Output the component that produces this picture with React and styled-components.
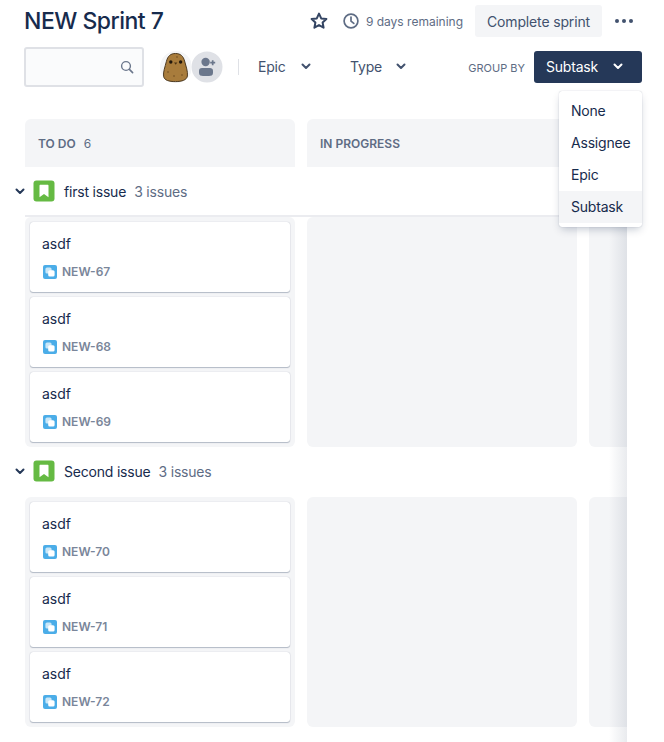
import React from 'react';
import styled, { createGlobalStyle } from 'styled-components';

const GlobalStyle = createGlobalStyle`
  html, body {
    margin: 0;
    padding: 0;
    background: #fff;
    font-family: Inter, "Liberation Sans", sans-serif;
    color: #172b4d;
  }
  * {
    box-sizing: border-box;
  }
`;

const Chevron = ({ color = 'currentColor' }) => (
  <svg width="10" height="7" viewBox="0 0 10 7" fill="none">
    <path d="M1.5 1.5 L5 5 L8.5 1.5" stroke={color} strokeWidth="2" strokeLinecap="round" strokeLinejoin="round" />
  </svg>
);

const Star = () => (
  <svg width="20" height="20" viewBox="0 0 20 20" fill="none">
    <path
      d="M10 2.6 L12.2 7.4 L17.4 8 L13.6 11.5 L14.6 16.7 L10 14.1 L5.4 16.7 L6.4 11.5 L2.6 8 L7.8 7.4 Z"
      stroke="#344563"
      strokeWidth="2"
      strokeLinejoin="round"
    />
  </svg>
);

const Clock = () => (
  <svg width="16" height="16" viewBox="0 0 16 16" fill="none">
    <circle cx="8" cy="8" r="6.9" stroke="#5e6c84" strokeWidth="1.7" />
    <path d="M8 4 V8.2 L10.8 10.4" stroke="#5e6c84" strokeWidth="1.7" strokeLinecap="round" strokeLinejoin="round" />
  </svg>
);

const Search = () => (
  <svg width="14" height="14" viewBox="0 0 14 14" fill="none">
    <circle cx="6" cy="6" r="4.4" stroke="#6b778c" strokeWidth="1.4" />
    <path d="M9.4 9.4 L12.6 12.6" stroke="#6b778c" strokeWidth="1.6" strokeLinecap="round" />
  </svg>
);

const Potato = () => (
  <svg width="31" height="32" viewBox="0 0 31 32">
    <circle cx="16" cy="16" r="16" fill="#f4f5f7" />
    <path
      d="M15.5 2.5 C20.5 2.5 23.2 5 24.6 10 C26 15.4 28 20.6 27.4 25 C26.8 29 22 30.6 15.5 30.6 C9 30.6 4.2 29.4 3.6 25.2 C3 21 5 16 6.4 10.4 C7.8 5 10.5 2.5 15.5 2.5 Z"
      fill="#a87c3c"
      stroke="#3f2c14"
      strokeWidth="0.9"
    />
    <circle cx="10.8" cy="11" r="1.7" fill="#21170c" />
    <circle cx="20.6" cy="11" r="1.7" fill="#21170c" />
    <path d="M14 11.6 H17.4 L15.7 13.8 Z" fill="#4e3515" />
    <circle cx="8" cy="21" r="0.8" fill="#6f4d20" />
    <circle cx="17" cy="6" r="0.8" fill="#6f4d20" />
    <circle cx="22" cy="24" r="0.8" fill="#6f4d20" />
    <circle cx="14" cy="25" r="0.8" fill="#6f4d20" />
  </svg>
);

const AddPerson = () => (
  <svg width="32" height="32" viewBox="0 0 32 32">
    <circle cx="16" cy="16" r="15.5" fill="#dfe1e6" />
    <circle cx="14.6" cy="11" r="4.2" fill="#6b778c" />
    <path d="M8 19.5 C8 17.8 9.4 17 11 17 H19 C20.6 17 22 18 22 19.5 V22 C22 24.4 20 25 18 25 H12 C10 25 8 24.4 8 22 Z" fill="#6b778c" />
    <path d="M21.7 9.2 V14.2 M19.2 11.7 H24.2" stroke="#6b778c" strokeWidth="1.7" />
  </svg>
);

const Bookmark = () => (
  <svg width="22" height="22" viewBox="0 0 22 22">
    <rect x="0.5" y="0.5" width="21" height="21" rx="3" fill="#65ba43" />
    <path d="M6.5 5.8 C6.5 5.2 6.9 4.8 7.5 4.8 H14.5 C15.1 4.8 15.5 5.2 15.5 5.8 V17.2 L11 14 L6.5 17.2 Z" fill="#fff" />
  </svg>
);

const SubtaskIcon = () => (
  <svg width="14" height="14" viewBox="0 0 14 14">
    <rect width="14" height="14" rx="2" fill="#4bade8" />
    <rect x="2.4" y="2.4" width="6.2" height="6.2" rx="1.6" fill="#fff" fillOpacity="0.7" />
    <rect x="5.2" y="5.2" width="6.4" height="6.4" rx="1.6" fill="#fff" />
  </svg>
);

const Page = styled.div`
  position: relative;
  width: 664px;
  height: 742px;
  overflow: hidden;
`;

const TitleRow = styled.header`
  display: flex;
  align-items: center;
  height: 32px;
  margin-top: 5px;
  padding: 0 31px 0 24px;
`;

const Title = styled.h1`
  flex: 1;
  margin: 0;
  font-size: 23px;
  line-height: 32px;
  font-weight: 500;
  letter-spacing: -0.5px;
  color: #172b4d;
`;

const StarSlot = styled.span`
  display: flex;
  margin-right: 14px;
`;

const Remaining = styled.span`
  display: flex;
  align-items: center;
  gap: 7px;
  margin-right: 12px;
  font-size: 12px;
  color: #5e6c84;
`;

const CompleteButton = styled.button`
  width: 127px;
  height: 32px;
  padding: 0;
  border: 0;
  border-radius: 3px;
  background: #f4f5f7;
  color: #42526e;
  font: 400 14px Inter, "Liberation Sans", sans-serif;
  letter-spacing: -0.15px;
`;

const Dots = styled.span`
  display: flex;
  gap: 3px;
  margin-left: 13px;
`;

const Dot = styled.i`
  width: 4px;
  height: 4px;
  border-radius: 50%;
  background: #42526e;
`;

const Toolbar = styled.div`
  display: flex;
  align-items: center;
  height: 40px;
  margin-top: 10px;
  padding: 0 22px 0 24px;
`;

const SearchBox = styled.div`
  display: flex;
  align-items: center;
  justify-content: flex-end;
  width: 120px;
  height: 40px;
  padding-right: 8px;
  border: 2px solid #dfe1e6;
  border-radius: 3px;
  background: #fafbfc;
`;

const Avatars = styled.div`
  display: flex;
  margin-left: 16px;
`;

const Divider = styled.span`
  width: 1px;
  height: 16px;
  margin: 0 19px 0 15px;
  background: #dfe1e6;
`;

const Filter = styled.span`
  display: flex;
  align-items: center;
  gap: ${(p) => p.$gap}px;
  width: ${(p) => p.$width}px;
  padding-bottom: 2px;
  font-size: 14px;
  letter-spacing: -0.2px;
  color: #42526e;
`;

const GroupLabel = styled.span`
  margin: 1px 9px 0 auto;
  font-size: 11px;
  color: #5e6c84;
`;

const GroupButton = styled.button`
  display: flex;
  align-items: center;
  justify-content: space-between;
  width: 108px;
  height: 32px;
  padding: 0 19px 2px 12px;
  border: 0;
  border-radius: 3px;
  background: #253858;
  color: #fff;
  font: 400 14px Inter, "Liberation Sans", sans-serif;
  letter-spacing: -0.2px;
`;

const Menu = styled.ul`
  position: absolute;
  top: 91px;
  left: 559px;
  z-index: 3;
  width: 83px;
  margin: 0;
  padding: 4px 0;
  list-style: none;
  border-radius: 3px;
  background: #fff;
  box-shadow: 0 4px 8px -2px rgba(9, 30, 66, 0.25), 0 0 1px rgba(9, 30, 66, 0.31);
`;

const MenuItem = styled.li`
  height: 32px;
  padding-left: 12px;
  font-size: 14px;
  letter-spacing: -0.2px;
  line-height: 32px;
  color: #172b4d;
  background: ${(p) => (p.$active ? '#f4f5f7' : 'transparent')};
`;

const Board = styled.section`
  position: relative;
  width: 627px;
  height: 623px;
  margin-top: 32px;
  overflow: hidden;
`;

const Fade = styled.div`
  position: absolute;
  top: 0;
  right: 0;
  bottom: 0;
  width: 18px;
  background: linear-gradient(to right, rgba(9, 30, 66, 0), rgba(9, 30, 66, 0.09));
`;

const Columns = styled.div`
  display: grid;
  grid-template-columns: repeat(3, 270px);
  gap: 12px;
  padding-left: 25px;
`;

const ColumnHead = styled.div`
  height: 48px;
  padding-left: 13px;
  border-radius: 6px 6px 0 0;
  background: #f4f5f7;
  font-size: 12px;
  font-weight: 600;
  line-height: 50px;
  color: #5e6c84;
`;

const Count = styled.span`
  margin-left: 8px;
  font-weight: 400;
`;

const LaneHead = styled.div`
  display: flex;
  align-items: center;
  height: 50px;
  padding-bottom: 2px;
  padding-left: 15px;
  font-size: 14px;
  letter-spacing: -0.2px;
  color: #172b4d;
`;

const LaneRule = styled.div`
  height: 2px;
  margin: -2px 0 0 25px;
  background: #ebecf0;
`;

const LaneChevron = styled.span`
  display: flex;
  width: 18px;
`;

const LaneName = styled.span`
  margin-left: 9px;
`;

const LaneCount = styled.span`
  margin-left: 8px;
  color: #5e6c84;
`;

const Cell = styled.div`
  display: flex;
  flex-direction: column;
  gap: 5px;
  height: 230px;
  padding: 5px;
  border-radius: 6px;
  background: #f4f5f7;
`;

const Card = styled.article`
  height: 70px;
  padding: 12px;
  border-radius: 3px;
  background: #fff;
  box-shadow: 0 1px 1px rgba(9, 30, 66, 0.25), 0 0 1px rgba(9, 30, 66, 0.31);
`;

const CardTitle = styled.div`
  font-size: 14px;
  line-height: 20px;
  color: #172b4d;
`;

const CardKey = styled.div`
  display: flex;
  align-items: center;
  gap: 5px;
  margin: 10px 0 0 1px;
  font-size: 12px;
  font-weight: 600;
  line-height: 16px;
  color: #7a869a;
`;

const lanes = [
  { name: 'first issue', first: true, keys: ['NEW-67', 'NEW-68', 'NEW-69'] },
  { name: 'Second issue', first: false, keys: ['NEW-70', 'NEW-71', 'NEW-72'] },
];

export default function App() {
  return (
    <Page>
      <GlobalStyle />
      <TitleRow>
        <Title>NEW Sprint 7</Title>
        <StarSlot>
          <Star />
        </StarSlot>
        <Remaining>
          <Clock />
          9 days remaining
        </Remaining>
        <CompleteButton>Complete sprint</CompleteButton>
        <Dots>
          <Dot />
          <Dot />
          <Dot />
        </Dots>
      </TitleRow>
      <Toolbar>
        <SearchBox>
          <Search />
        </SearchBox>
        <Avatars>
          <Potato />
          <AddPerson />
        </Avatars>
        <Divider />
        <Filter $width={92} $gap={15}>
          Epic
          <Chevron />
        </Filter>
        <Filter $width={70} $gap={14}>
          Type
          <Chevron />
        </Filter>
        <GroupLabel>GROUP BY</GroupLabel>
        <GroupButton>
          Subtask
          <Chevron />
        </GroupButton>
      </Toolbar>
      <Menu>
        <MenuItem>None</MenuItem>
        <MenuItem>Assignee</MenuItem>
        <MenuItem>Epic</MenuItem>
        <MenuItem $active>Subtask</MenuItem>
      </Menu>
      <Board>
        <Columns>
          <ColumnHead>
            TO DO<Count>6</Count>
          </ColumnHead>
          <ColumnHead>IN PROGRESS</ColumnHead>
          <ColumnHead />
        </Columns>
        {lanes.map((lane) => (
          <div key={lane.name}>
            <LaneHead>
              <LaneChevron>
                <Chevron color="#253858" />
              </LaneChevron>
              <Bookmark />
              <LaneName>{lane.name}</LaneName>
              <LaneCount>3 issues</LaneCount>
            </LaneHead>
            {lane.first && <LaneRule />}
            <Columns>
              <Cell>
                {lane.keys.map((key) => (
                  <Card key={key}>
                    <CardTitle>asdf</CardTitle>
                    <CardKey>
                      <SubtaskIcon />
                      {key}
                    </CardKey>
                  </Card>
                ))}
              </Cell>
              <Cell />
              <Cell />
            </Columns>
          </div>
        ))}
        <Fade />
      </Board>
    </Page>
  );
}
